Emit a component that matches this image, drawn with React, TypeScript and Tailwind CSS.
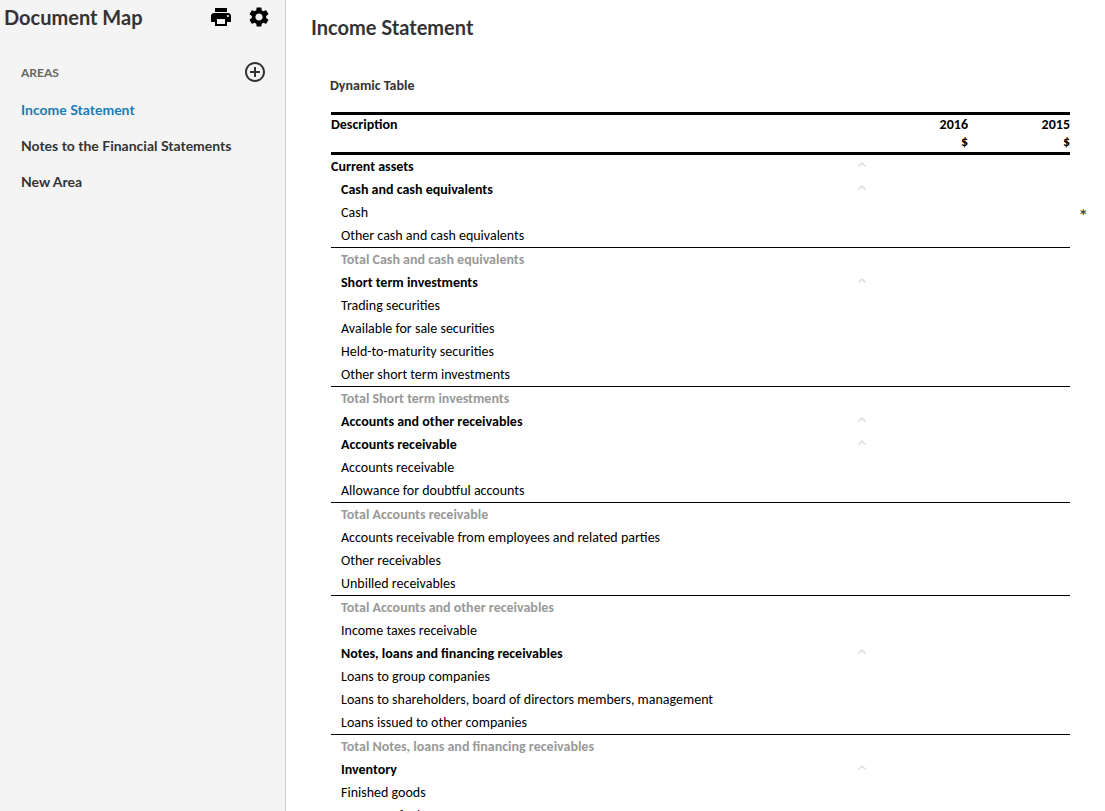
import { MdPrint, MdSettings, MdAddCircleOutline } from "react-icons/md";

type Row = { label: string; kind?: "top" | "head" | "total"; mark?: boolean };

const rows: Row[] = [
  { label: "Current assets", kind: "top" },
  { label: "Cash and cash equivalents", kind: "head" },
  { label: "Cash", mark: true },
  { label: "Other cash and cash equivalents" },
  { label: "Total Cash and cash equivalents", kind: "total" },
  { label: "Short term investments", kind: "head" },
  { label: "Trading securities" },
  { label: "Available for sale securities" },
  { label: "Held-to-maturity securities" },
  { label: "Other short term investments" },
  { label: "Total Short term investments", kind: "total" },
  { label: "Accounts and other receivables", kind: "head" },
  { label: "Accounts receivable", kind: "head" },
  { label: "Accounts receivable" },
  { label: "Allowance for doubtful accounts" },
  { label: "Total Accounts receivable", kind: "total" },
  { label: "Accounts receivable from employees and related parties" },
  { label: "Other receivables" },
  { label: "Unbilled receivables" },
  { label: "Total Accounts and other receivables", kind: "total" },
  { label: "Income taxes receivable" },
  { label: "Notes, loans and financing receivables", kind: "head" },
  { label: "Loans to group companies" },
  { label: "Loans to shareholders, board of directors members, management" },
  { label: "Loans issued to other companies" },
  { label: "Total Notes, loans and financing receivables", kind: "total" },
  { label: "Inventory", kind: "head" },
  { label: "Finished goods" },
  { label: "Inventory fuel" },
];

function labelClass(kind: Row["kind"]) {
  if (kind === "top") return "text-left font-bold";
  if (kind === "head") return "pl-[10px] text-left font-bold";
  if (kind === "total") return "pl-[10px] text-left font-bold text-[#999999]";
  return "pl-[10px] text-left font-normal";
}

function Collapse({ label }: { label: string }) {
  return (
    <button type="button" aria-label={`Collapse ${label}`} className="flex h-[19px] items-center">
      <svg width="8" height="5" viewBox="0 0 8 5" fill="none" stroke="#e0e0e0" strokeWidth="1.6">
        <path d="M0.4 4.5 4 1.2 7.6 4.5" />
      </svg>
    </button>
  );
}

export default function App() {
  return (
    <div className="flex h-screen overflow-hidden bg-white font-['Lato',sans-serif] text-[#333333]">
      <aside className="w-[286px] shrink-0 border-r border-[#cccccc] bg-[#f4f4f4]">
        <header className="flex h-[34px] items-center justify-between pr-[14px] pl-1">
          <h1 className="text-[20px] leading-[34px] font-bold">Document Map</h1>
          <div className="flex gap-[14px] text-black">
            <button type="button" aria-label="Print"><MdPrint size={24} /></button>
            <button type="button" aria-label="Settings"><MdSettings size={24} /></button>
          </div>
        </header>
        <div className="mt-[26px] flex h-6 items-center justify-between pr-[18px] pl-[21px]">
          <h2 className="pt-px text-[12px] font-bold text-[#666666]">AREAS</h2>
          <button type="button" aria-label="Add area"><MdAddCircleOutline size={24} /></button>
        </div>
        <nav className="mt-2 flex flex-col pl-[21px] text-[14px] leading-9 font-bold">
          <a href="#income" className="text-[#1a7bb5]">Income Statement</a>
          <a href="#notes">Notes to the Financial Statements</a>
          <a href="#new">New Area</a>
        </nav>
      </aside>
      <main className="min-w-0 flex-1 overflow-hidden pt-[7px] pr-[35px] pl-[25px]">
        <h2 className="text-[20px] leading-10 font-bold">Income Statement</h2>
        <section className="mt-[29px] pl-5 font-['Carlito','Lato',sans-serif]">
          <h3 className="-ml-px text-[14px] leading-5 font-bold">Dynamic Table</h3>
          <table className="mt-4 w-full table-fixed border-separate border-spacing-0 text-[14px] text-black">
            <colgroup>
              <col />
              <col className="w-[40px]" />
              <col className="w-[70px]" />
              <col className="w-[102px]" />
            </colgroup>
            <thead>
              <tr className="align-top leading-[18px]">
                <th scope="col" className="h-[43px] border-y-3 border-black p-0 pt-px text-left">Description</th>
                <td className="border-y-3 border-black p-0"></td>
                <th scope="col" className="border-y-3 border-black p-0 pt-px text-right leading-[17px]">2016<br />$</th>
                <th scope="col" className="border-y-3 border-black p-0 pt-px text-right leading-[17px]">2015<br />$</th>
              </tr>
            </thead>
            <tbody className="leading-[23px]">
              {rows.map((r, i) => {
                const line = r.kind === "total" ? "border-t border-black p-0" : "p-0";
                return (
                  <tr key={i} className="h-[23px]">
                    <th scope="row" className={`${line} ${labelClass(r.kind)}`}>{r.label}</th>
                    <td className={`${line} align-top`}>{(r.kind === "top" || r.kind === "head") && <Collapse label={r.label} />}</td>
                    <td className={line}></td>
                    <td className={line}>
                      {r.mark && (
                        <div className="relative h-[23px]">
                          <span className="absolute top-[3px] left-full ml-[9px] font-['Lato'] text-[20px] text-[#333333]">*</span>
                        </div>
                      )}
                    </td>
                  </tr>
                );
              })}
            </tbody>
          </table>
        </section>
      </main>
    </div>
  );
}
